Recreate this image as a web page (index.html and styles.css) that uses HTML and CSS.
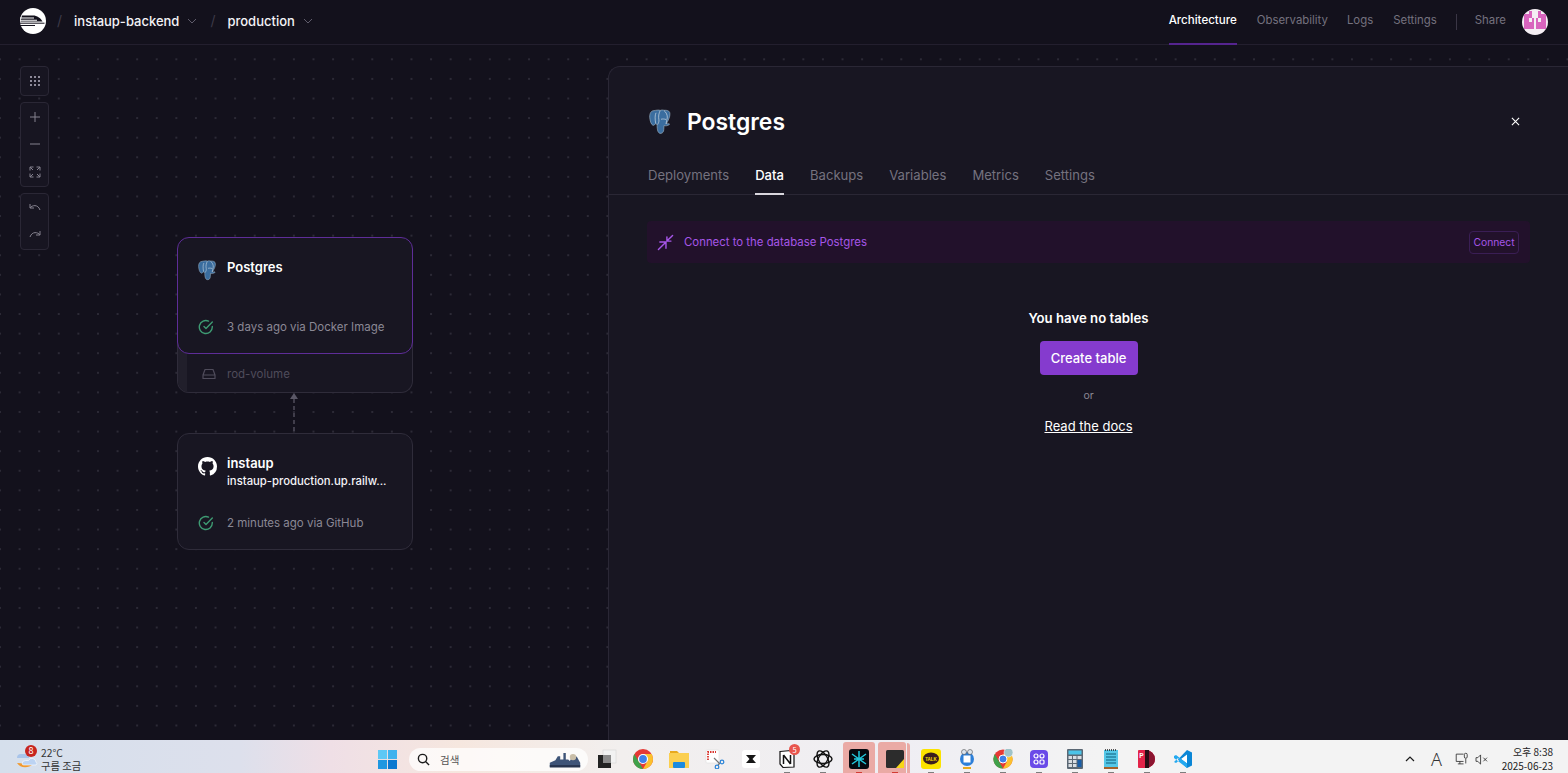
FILE: index.html
```html
<!DOCTYPE html>
<html lang="en">
<head>
<meta charset="utf-8">
<title>instaup-backend - Railway</title>
<link rel="stylesheet" href="styles.css">
</head>
<body>
<header class="topbar">
  <div class="crumbs">
    <svg class="logo" viewBox="0 0 26 26"><circle cx="13" cy="13" r="13" fill="#fff"/><path d="M2 7.500h11c4 0 7.500 2.500 9.500 6H.5z" fill="#13111c"/><path d="M0 10h14M0 12.200h17" stroke="#fff" stroke-width="1.100"/><path d="M0 15.200h24.500M0 17.500h15" stroke="#13111c" stroke-width="1"/></svg>
    <span class="slash first">/</span>
    <span class="crumb">instaup-backend</span>
    <svg class="chev" viewBox="0 0 10 6"><path d="M1 1l4 4 4-4" fill="none" stroke="currentColor" stroke-width="1"/></svg>
    <span class="slash">/</span>
    <span class="crumb">production</span>
    <svg class="chev" viewBox="0 0 10 6"><path d="M1 1l4 4 4-4" fill="none" stroke="currentColor" stroke-width="1"/></svg>
  </div>
  <nav class="topnav">
    <a class="navitem active">Architecture</a>
    <a class="navitem obs">Observability</a>
    <a class="navitem">Logs</a>
    <a class="navitem settings">Settings</a>
    <span class="navsep"></span>
    <a class="navitem share">Share</a>
    <svg class="avatar" viewBox="0 0 26 26"><defs><clipPath id="avc"><circle cx="13" cy="13" r="13"/></clipPath></defs><g clip-path="url(#avc)"><rect width="26" height="26" fill="#f4eef3"/><path d="M2 5h5v15H2zM19 5h5v15h-5zM7 2h3v7H7zM16 2h3v7h-3zM10 9h2v11h-2zM14 9h2v11h-2zM7 13h3v7H7zM16 13h3v7h-3z" fill="#d864bd"/></g></svg>
  </nav>
</header>

<main class="canvas">
  <div class="tools">
    <div class="toolgroup">
      <button class="tool"><svg viewBox="0 0 12 12"><g fill="#8d8a99"><rect x="1" y="1" width="2" height="2"/><rect x="5" y="1" width="2" height="2"/><rect x="9" y="1" width="2" height="2"/><rect x="1" y="5" width="2" height="2"/><rect x="5" y="5" width="2" height="2"/><rect x="9" y="5" width="2" height="2"/><rect x="1" y="9" width="2" height="2"/><rect x="5" y="9" width="2" height="2"/><rect x="9" y="9" width="2" height="2"/></g></svg></button>
    </div>
    <div class="toolgroup">
      <button class="tool"><svg viewBox="0 0 12 12"><path d="M6 1v10M1 6h10" class="ts"/></svg></button>
      <button class="tool"><svg viewBox="0 0 12 12"><path d="M1 6h10" class="ts"/></svg></button>
      <button class="tool"><svg viewBox="0 0 12 12"><path d="M1 4.500V1h3.500M1 1l3 3M7.500 1H11v3.500M11 1L8 4M1 7.500V11h3.500M1 11l3-3M7.500 11H11V7.500M11 11L8 8" class="ts"/></svg></button>
    </div>
    <div class="toolgroup">
      <button class="tool"><svg viewBox="0 0 12 12"><path d="M1 2v4h4M1 6c2-3 8-4 10 2" class="ts"/></svg></button>
      <button class="tool"><svg viewBox="0 0 12 12"><path d="M11 2v4H7M11 6C9 3 3 2 1 8" class="ts"/></svg></button>
    </div>
  </div>

  <section class="node-stack pg-node">
    <div class="card selected">
      <div class="card-head">
        <svg class="elephant" viewBox="0 0 24 24" preserveAspectRatio="none"><use href="#pg"/></svg>
        <div class="card-title">Postgres</div>
      </div>
      <div class="card-status">
        <svg class="check" viewBox="0 0 16 16"><path d="M14.300 7.400V8a6.500 6.500 0 1 1-3.800-5.900M14.300 3L8 9.400 6 7.400" fill="none" stroke="#3e9b73" stroke-width="1.400" stroke-linecap="round" stroke-linejoin="round"/></svg>
        <span>3 days ago via Docker Image</span>
      </div>
    </div>
    <div class="volume">
      <div class="vol-stripe"></div>
      <svg class="vol-icon" viewBox="0 0 14 12"><path d="M1 7l2-5.500h8L13 7v3.500H1zM1 7h12" fill="none" stroke="#4f4c5b" stroke-width="1.200" stroke-linejoin="round"/></svg>
      <span>rod-volume</span>
    </div>
  </section>

  <svg class="edge" viewBox="0 0 10 42"><path d="M1 8l4-6 4 6z" fill="#5a5766"/><path d="M5 8v33" stroke="#5a5766" stroke-width="1.300" stroke-dasharray="4 3"/></svg>

  <section class="node-stack gh-node">
    <div class="card">
      <div class="card-head">
        <svg class="github" viewBox="0 0 16 16"><path fill="#fff" d="M8 0C3.580 0 0 3.580 0 8c0 3.540 2.290 6.530 5.470 7.590.4.070.55-.17.55-.38 0-.19-.01-.82-.01-1.490-2.010.37-2.530-.49-2.690-.94-.09-.23-.48-.94-.82-1.130-.28-.15-.68-.52-.01-.53.63-.01 1.080.58 1.230.82.720 1.210 1.870.87 2.330.66.070-.52.280-.87.510-1.070-1.780-.2-3.640-.89-3.640-3.950 0-.87.310-1.590.820-2.150-.08-.2-.36-1.020.08-2.120 0 0 .67-.21 2.200.82.640-.18 1.320-.27 2-.27s1.360.09 2 .27c1.530-1.040 2.200-.82 2.200-.82.440 1.100.16 1.920.08 2.120.51.560.82 1.270.82 2.150 0 3.070-1.870 3.750-3.650 3.950.29.250.54.730.54 1.480 0 1.070-.01 1.930-.01 2.200 0 .21.150.46.550.38A8.010 8.010 0 0 0 16 8c0-4.420-3.580-8-8-8z"/></svg>
        <div class="card-text">
          <div class="card-title">instaup</div>
          <div class="card-url">instaup-production.up.railw...</div>
        </div>
      </div>
      <div class="card-status">
        <svg class="check" viewBox="0 0 16 16"><path d="M14.300 7.400V8a6.500 6.500 0 1 1-3.800-5.900M14.300 3L8 9.400 6 7.400" fill="none" stroke="#3e9b73" stroke-width="1.400" stroke-linecap="round" stroke-linejoin="round"/></svg>
        <span>2 minutes ago via GitHub</span>
      </div>
    </div>
  </section>

  <aside class="panel">
    <div class="panel-head">
      <svg class="elephant big" viewBox="0 0 24 24" preserveAspectRatio="none">
        <defs><g id="pg">
          <path d="M5 1.500C2.200 1.500.5 4 .7 7.500c.2 3.300 1.400 6.800 3.200 7.500 1.200.4 1.900-.6 2.600-1.500.6.500 1.200.7 1.700.8-.2 1-.1 3 .3 5 .5 2.300 1.800 3.500 3.500 3.200 1.700-.3 2.700-1.400 2.800-3.700l.2-3.500c1.800.5 3.300.2 5-.7.900-.6.500-1.200-.7-1-.9.100-1.500.1-1.900-.1 1.700-2.600 3.800-6.500 3.500-9C21 1.500 17.800 1 15 1.200c-1.100-.4-2.600-.4-3.800.1C9.500.6 7 1.200 5 1.500z" fill="#3a6d9f" stroke="#9fb4c6" stroke-width=".6"/>
          <path d="M7 3.500c-1 2-1.200 5.500-.3 9.800M11.200 1.500C9.800 4 9.200 7 9.900 10c.4 1.700-.7 3.300-1.200 4.300M15 1.500c2.300 1.500 3.500 4.200 3.300 6.700-.1 1.800-1.300 3.500-1.300 5.700M12 9.500c1.500-.5 3.500-.3 5 .2" fill="none" stroke="#dfe7ee" stroke-width=".6"/>
        </g></defs>
        <use href="#pg"/>
      </svg>
      <h1 class="panel-title">Postgres</h1>
      <button class="close"><svg viewBox="0 0 10 10"><path d="M1 1l8 8M9 1L1 9" stroke="#fff" stroke-width="1.200"/></svg></button>
    </div>
    <div class="tabs">
      <a class="tab">Deployments</a>
      <a class="tab current">Data</a>
      <a class="tab">Backups</a>
      <a class="tab">Variables</a>
      <a class="tab">Metrics</a>
      <a class="tab">Settings</a>
    </div>
    <div class="panel-body">
      <div class="banner">
        <svg class="plug" viewBox="0 0 18 18"><path d="M1.500 16.500L8.500 9.500M3 8.500h6.500V15M16.500 1.500L11 7M14.800 7.500H10.500V3" fill="none" stroke="#a656e8" stroke-width="1.500" stroke-linecap="round" stroke-linejoin="round"/></svg>
        <span class="banner-text">Connect to the database Postgres</span>
        <button class="connect">Connect</button>
      </div>
      <div class="empty">
        <div class="empty-title">You have no tables</div>
        <button class="create">Create table</button>
        <div class="or">or</div>
        <a class="docs">Read the docs</a>
      </div>
    </div>
  </aside>
</main>

<footer class="taskbar">
  <div class="weather">
    <svg class="wicon" viewBox="0 0 24 22"><path d="M2 10a4 4 0 0 1 4-4h5a3 3 0 0 1 3 4z" fill="#a8c4ea"/><path d="M2 15c3 5 11 6 16 1z" fill="#f09a30"/><path d="M7 16a3.500 3.500 0 0 1 3.500-3.500h3A4 4 0 0 1 21 14a2 2 0 0 1 0 3H9a2 2 0 0 1-2-1z" fill="#bcd3f2" stroke="#fff" stroke-width=".6"/></svg>
    <span class="wbadge">8</span>
    <div class="wtext"><div>22°C</div><div>구름 조금</div></div>
  </div>
  <div class="apps">
    <svg class="win" viewBox="0 0 20 20"><rect width="9.500" height="9.500" fill="#5ec8f5"/><rect x="10.500" width="9.500" height="9.500" fill="#3fb2ee"/><rect y="10.500" width="9.500" height="9.500" fill="#1f97e0"/><rect x="10.500" y="10.500" width="9.500" height="9.500" fill="#0a78d0"/></svg>
    <div class="search">
      <svg class="mag" viewBox="0 0 14 14"><circle cx="6" cy="6" r="4.500" fill="none" stroke="#1b1b1b" stroke-width="1.500"/><path d="M9.500 9.500l3.500 3.500" stroke="#1b1b1b" stroke-width="1.500"/></svg>
      <span class="search-text">검색</span>
      <svg class="search-art" viewBox="0 0 40 20"><path d="M1 19v-5l7-3 3-5h3v4h4V2h3v8h3l2 2 3-5a4 4 0 0 1 6 0l4 7v5z" fill="#3e5478"/><path d="M1 17h38v3H1z" fill="#26344f"/><circle cx="30" cy="7" r="4" fill="#c9bea8"/></svg>
    </div>
    <span class="app"><svg viewBox="0 0 20 20"><rect x="6" y="1" width="13" height="13" fill="#f2f2f2" stroke="#d0d0d0" stroke-width=".5"/><rect x="1" y="6" width="13" height="13" fill="#222"/><rect x="6" y="6" width="8" height="8" fill="#8b8b8b"/></svg></span>
    <span class="app"><svg viewBox="0 0 20 20"><circle cx="10" cy="10" r="10" fill="#e53935"/><path d="M10 5h8.660A10 10 0 0 1 10 20l4.330-7.500z" fill="#fbc02d"/><path d="M1.340 5L5.670 12.500 10 20A10 10 0 0 1 1.340 5z" fill="#3fa14a"/><circle cx="10" cy="10" r="4.500" fill="#3f7fe8" stroke="#fff" stroke-width="1.200"/></svg></span>
    <span class="app"><svg viewBox="0 0 20 20"><path d="M1 2h7l2 2H1z" fill="#e8a91d"/><rect x="0" y="4" width="20" height="15" fill="#fbcf50"/><rect x="4" y="13" width="12" height="6" rx="1" fill="#1b8be0"/></svg></span>
    <span class="app"><svg viewBox="0 0 20 20"><rect x="1" y="1" width="13" height="13" rx="1" fill="#fff" stroke="#ddd" stroke-width=".6"/><path d="M3 11V3h8" fill="none" stroke="#d9362f" stroke-width="1.800" stroke-dasharray="1.500 1"/><path d="M9 9l6 6M13 16l2-2" stroke="#777" stroke-width="1.200"/><circle cx="17" cy="13" r="1.800" fill="none" stroke="#2c85d8" stroke-width="1.200"/><circle cx="12" cy="18" r="1.800" fill="none" stroke="#2c85d8" stroke-width="1.200"/></svg></span>
    <span class="app"><svg viewBox="0 0 20 20"><rect x="1" y="1" width="18" height="18" rx="3" fill="#fff"/><path d="M5 6h10l-3.500 4 3.500 4H5l3.500-4z" fill="#161616"/></svg></span>
    <span class="app"><svg viewBox="0 0 20 20"><path d="M3 2.500l11-1 3 2.500v14l-11 .5-3-3.500z" fill="#fff" stroke="#111" stroke-width="1.200"/><path d="M6.500 6v9M6.500 6l7 9M13.500 6v9" fill="none" stroke="#111" stroke-width="1.500"/></svg><span class="app-badge">5</span><i class="dot"></i></span>
    <span class="app"><svg viewBox="0 0 20 20"><g fill="none" stroke="#111" stroke-width="1.400"><ellipse cx="10" cy="10" rx="9" ry="4.500"/><ellipse cx="10" cy="10" rx="9" ry="4.500" transform="rotate(60 10 10)"/><ellipse cx="10" cy="10" rx="9" ry="4.500" transform="rotate(120 10 10)"/></g></svg><i class="dot"></i></span>
    <span class="app running"><svg viewBox="0 0 20 20"><rect width="20" height="20" rx="3" fill="#06090f"/><path d="M10 2v16M3 5l14 10M17 5L3 15M5 10h10" stroke="#22c7dc" stroke-width="1.500"/></svg><i class="dot red"></i></span>
    <span class="app running stacked"><svg viewBox="0 0 20 20"><rect width="18" height="18" x="1" y="1" rx="1.500" fill="#2c2c2c"/><path d="M19 10v9h-8z" fill="#f7d616"/></svg><i class="dot red"></i></span>
    <span class="app"><svg viewBox="0 0 20 20"><rect width="20" height="20" rx="3" fill="#fbe300"/><ellipse cx="10" cy="9.500" rx="8" ry="6" fill="#3b1e1e"/><text x="10" y="11.500" class="talk">TALK</text></svg><i class="dot"></i></span>
    <span class="app"><svg viewBox="0 0 20 20"><circle cx="10" cy="10" r="7" fill="#2d7fd8"/><circle cx="7" cy="3" r="2.500" fill="#dfe6ee" stroke="#333" stroke-width=".5"/><circle cx="13" cy="3" r="2.500" fill="#dfe6ee" stroke="#333" stroke-width=".5"/><rect x="6.500" y="6.500" width="7" height="7" fill="#fff"/><path d="M6 19h8" stroke="#e8a91d" stroke-width="2"/></svg><i class="dot"></i></span>
    <span class="app"><svg viewBox="0 0 20 20"><circle cx="10" cy="10" r="9.500" fill="#e53935"/><path d="M10 5h8.200A9.500 9.500 0 0 1 10 19.500l4-7z" fill="#fbc02d"/><path d="M1.800 5L10 19.500A9.500 9.500 0 0 1 1.800 5z" fill="#3fa14a"/><circle cx="10" cy="10" r="4" fill="#3f7fe8" stroke="#fff"/><circle cx="15.500" cy="3.500" r="4.500" fill="#9fc3c9" stroke="#fff" stroke-width=".5"/></svg><i class="dot"></i></span>
    <span class="app"><svg viewBox="0 0 20 20"><rect x="1" y="1" width="18" height="18" rx="4" fill="#6a4ae8"/><g fill="none" stroke="#fff" stroke-width="1.200"><circle cx="7" cy="7" r="2"/><circle cx="13" cy="7" r="2"/><circle cx="7" cy="13" r="2"/><rect x="11" y="11" width="4" height="4" rx="1"/></g></svg><i class="dot"></i></span>
    <span class="app"><svg viewBox="0 0 20 20"><rect x="2" width="16" height="20" rx="1" fill="#5b6874"/><rect x="3.500" y="1.500" width="13" height="4" fill="#4cc4e8"/><g fill="#d9dee3"><rect x="3.500" y="7" width="3.500" height="3"/><rect x="8" y="7" width="3.500" height="3"/><rect x="3.500" y="11" width="3.500" height="3"/><rect x="8" y="11" width="3.500" height="3"/><rect x="3.500" y="15" width="3.500" height="3"/><rect x="8" y="15" width="3.500" height="3"/></g><rect x="12.500" y="11" width="4" height="7" fill="#1a5fa8"/><rect x="12.500" y="7" width="4" height="3" fill="#d9dee3"/></svg><i class="dot"></i></span>
    <span class="app"><svg viewBox="0 0 20 20"><rect x="3" y="1" width="14" height="19" fill="#55c8e8"/><rect x="3" y="18" width="14" height="2" fill="#a5622b"/><path d="M5 5h10M5 8h10M5 11h10M5 14h10" stroke="#0d5f7c" stroke-width="1.200"/><path d="M4 1h12" stroke="#222" stroke-width="1.500" stroke-dasharray="1 1"/></svg><i class="dot"></i></span>
    <span class="app"><svg viewBox="0 0 20 20"><path d="M1 2a1 1 0 0 1 1-1h7a9 9 0 0 1 0 18H2a1 1 0 0 1-1-1z" fill="#e32348"/><path d="M9 1a9 9 0 0 1 0 18 18 18 0 0 0 0-18z" fill="#8b1530"/><rect x="8" y="1" width="4" height="18" fill="#2a0d14"/><text x="4.500" y="8.500" class="pdf">P</text></svg><i class="dot"></i></span>
    <span class="app"><svg viewBox="0 0 20 20"><path d="M14 1l5 2.500v13L14 19 5 10.500z" fill="#0a86d6"/><path d="M14 5.500v9L8 10z" fill="#fff"/><path d="M1 7l2-1 11 8.500V19L1 9zM1 13l2 1 3.500-3L5 9z" fill="#23a9f0"/></svg><i class="dot"></i></span>
  </div>
  <div class="tray">
    <svg class="tray-up" viewBox="0 0 10 6"><path d="M1 5l4-4 4 4" fill="none" stroke="#1c1c1c" stroke-width="1.200"/></svg>
    <span class="tray-a">A</span>
    <svg class="tray-mon" viewBox="0 0 16 15"><path d="M10.500 1.500H1.500v9h9M3.500 13.500h7M6 10.500v3" fill="none" stroke="#2a2a2a"/><rect x="11.500" y=".5" width="3.500" height="6" rx="1.500" fill="none" stroke="#2a2a2a"/><path d="M13.250 7v6" stroke="#2a2a2a"/></svg>
    <svg class="tray-vol" viewBox="0 0 14 12"><path d="M1 4h2l3-3v10L3 8H1zM9 4l4 4M13 4l-4 4" fill="none" stroke="#2a2a2a" stroke-width=".9"/></svg>
    <div class="clock"><div>오후 8:38</div><div>2025-06-23</div></div>
  </div>
</footer>
</body>
</html>
```
FILE: styles.css
```css
* { box-sizing: border-box; }
html, body { margin: 0; height: 100%; }
body {
  display: flex;
  flex-direction: column;
  height: 773px;
  overflow: hidden;
  background: #13111c;
  font-family: Inter, "Noto Sans", sans-serif;
  color: #fff;
}
button { font-family: inherit; border: 0; padding: 0; background: none; color: inherit; }

/* top bar */
.topbar {
  flex: 0 0 45px;
  display: flex;
  align-items: flex-start;
  justify-content: space-between;
  padding: 0 20px;
  border-bottom: 1px solid #231f2e;
  background: #13111c;
}
.crumbs { display: flex; align-items: center; height: 41px; }
.logo { width: 26px; height: 26px; margin-right: 11px; }
.slash { color: #3d3a48; font-size: 14px; margin: 0 12px 0 0; }
.crumb { font-size: 13px; font-weight: 500; color: #f4f3f7; }
.chev { width: 10px; height: 6px; margin: 0 13px 0 8px; color: #5f5c6b; }
.topnav { display: flex; align-items: center; height: 44px; }
.navitem { font-size: 11.400px; color: #75727f; margin-right: 20px; line-height: 40px; padding-bottom: 4px; }
.navitem.active { color: #fff; font-weight: 500; position: relative; font-size: 11.550px; }
.navitem.active::after {
  content: "";
  position: absolute;
  left: 0;
  right: 0;
  bottom: -1px;
  height: 2px;
  background: #55248f;
}
.navitem.obs { margin-right: 19px; }
.navitem.settings { margin-right: 19px; }
.navsep { width: 1px; height: 16px; background: #3a3645; margin-right: 18px; }
.navitem.share { margin-right: 16px; }
.avatar { width: 26px; height: 26px; }

/* canvas */
.canvas {
  flex: 1;
  position: relative;
  min-height: 0;
  background-color: #13111c;
  background-image: radial-gradient(circle, #2c2a36 .7px, transparent 1px);
  background-size: 19.600px 19.600px;
  background-position: 9.800px 4.500px;
}
.tools {
  position: absolute;
  left: 20px;
  top: 21px;
  display: flex;
  flex-direction: column;
  gap: 6.500px;
}
.toolgroup {
  width: 29px;
  display: flex;
  flex-direction: column;
  background: #171521;
  border: 1px solid #2a2735;
  border-radius: 4px;
}
.tool { height: 27.500px; display: flex; align-items: center; justify-content: center; }
.tool svg { width: 12px; height: 12px; }
.ts { fill: none; stroke: #85828f; stroke-width: 1; }

.node-stack { position: absolute; width: 236px; left: 177px; }
.pg-node { top: 192px; }
.gh-node { top: 388px; }
.card {
  height: 117px;
  padding: 0 20px;
  background: #181622;
  border: 1px solid #2f2c3a;
  border-radius: 12px;
  display: flex;
  flex-direction: column;
  position: relative;
  z-index: 1;
}
.card.selected { border-color: #5e2d98; }
.card-head { display: flex; gap: 9px; height: 68px; padding-top: 20px; align-items: flex-start; }
.elephant { width: 20px; height: 21px; flex: none; margin-top: 2px; }
.github { width: 19px; height: 19px; flex: none; margin-top: 3px; margin-right: 1px; }
.card-text { min-width: 0; }
.card-title { font-size: 13px; font-weight: 600; color: #fff; line-height: 18px; }
.card-url { font-size: 11.300px; font-weight: 500; color: #f4f3f7; line-height: 18px; white-space: nowrap; }
.card-status {
  display: flex;
  align-items: center;
  gap: 13px;
  height: 18px;
  margin-top: 12px;
  font-size: 11.500px;
  color: #8b8895;
  white-space: nowrap;
}
.check { width: 16px; height: 16px; flex: none; }
.volume {
  margin-top: -12px;
  height: 51px;
  padding-top: 13px;
  display: flex;
  align-items: center;
  gap: 11px;
  position: relative;
  overflow: hidden;
  background: #181622;
  border: 1px solid #2f2c3a;
  border-top: 0;
  border-radius: 0 0 12px 12px;
  font-size: 11.500px;
  color: #4f4c5b;
}
.vol-stripe { width: 9px; align-self: stretch; margin-top: -13px; background: #211f2b; margin-right: 4px; }
.vol-icon { width: 14px; height: 12px; }
.edge { position: absolute; left: 289px; top: 346px; width: 10px; height: 42px; }

/* panel */
.panel {
  position: absolute;
  left: 608px;
  right: 0;
  top: 21px;
  bottom: 0;
  background: #181622;
  border: 1px solid #2a2735;
  border-right: 0;
  border-bottom: 0;
  border-top-left-radius: 12px;
  display: flex;
  flex-direction: column;
}
.panel-head { display: flex; align-items: center; height: 71px; padding: 39px 47px 0 40px; }
.elephant.big { width: 24px; height: 26px; margin: 0 14px 0 0; }
.panel-title { margin: 0; font-size: 22.900px; font-weight: 600; line-height: 32px; flex: 1; }
.close { width: 10px; height: 10px; display: flex; }
.close svg { width: 9px; height: 9px; }
.tabs {
  display: flex;
  gap: 26px;
  height: 57px;
  padding: 0 39px;
  align-items: flex-end;
  border-bottom: 1px solid #2a2735;
}
.tab {
  font-size: 13.100px;
  line-height: 20px;
  height: 38px;
  color: #75727f;
  position: relative;
  padding-top: 9px;
}
.tab.current { color: #fff; font-weight: 500; }
.tab.current::after {
  content: "";
  position: absolute;
  left: 0;
  right: 0;
  bottom: -1px;
  height: 2px;
  background: #d8d6dd;
}
.panel-body { padding: 26px 38px 0; display: flex; flex-direction: column; }
.banner {
  height: 42px;
  display: flex;
  align-items: center;
  padding: 0 11px 0 10px;
  background: #22112b;
  border-radius: 4px;
}
.plug { width: 17px; height: 17px; margin-right: 10px; }
.banner-text { flex: 1; font-size: 11.400px; color: #a656e8; }
.connect {
  width: 50px;
  height: 23px;
  border: 1px solid #3a1e55;
  border-radius: 4px;
  font-size: 10.300px;
  color: #a656e8;
}
.empty { display: flex; flex-direction: column; align-items: center; padding-top: 46px; }
.empty-title { font-size: 13.200px; font-weight: 600; line-height: 18px; }
.create {
  margin-top: 14px;
  width: 98px;
  height: 34px;
  background: #853bce;
  border-radius: 4px;
  font-size: 13px;
  font-weight: 500;
  color: #fff;
}
.or { margin-top: 13px; font-size: 10.500px; line-height: 16px; color: #8b8895; }
.docs { margin-top: 13px; font-size: 13px; line-height: 18px; text-decoration: underline; }

/* taskbar */
.taskbar {
  flex: 0 0 33px;
  display: flex;
  align-items: flex-end;
  position: relative;
  background: linear-gradient(90deg, #d5dfec 0, #dde0ec 240px, #efdfe6 330px, #f6e7df 460px, #f2efee 620px, #efeef3 900px, #f3f3f3 1100px);
  font-family: "Noto Sans CJK KR", "Noto Sans", sans-serif;
  color: #222;
}
.weather { width: 378px; height: 31px; padding: 3px 0 0 15px; display: flex; align-items: center; position: relative; flex: none; }
.wicon { width: 24px; height: 22px; }
.wbadge {
  position: absolute;
  left: 25px;
  top: 3px;
  width: 12px;
  height: 12px;
  border-radius: 50%;
  background: #c7251d;
  color: #fff;
  font-size: 9px;
  line-height: 12px;
  text-align: center;
}
.wtext { margin-left: 2px; font-size: 10.300px; line-height: 13px; color: #333; }
.apps { display: flex; align-items: center; height: 31px; }
.win { width: 19px; height: 19px; flex: none; margin-top: 3px; }
.search {
  width: 179px;
  height: 23px;
  margin: 3px 1px 0 12px;
  padding: 0 7px 0 8px;
  display: flex;
  align-items: center;
  background: rgba(255,255,255,.75);
  border-radius: 12px;
  flex: none;
}
.mag { width: 13px; height: 13px; }
.search-text { margin-left: 10px; font-size: 10.500px; color: #555; flex: 1; }
.search-art { width: 32px; height: 19px; }
.app {
  width: 36px;
  height: 31px;
  padding-top: 3px;
  display: flex;
  align-items: center;
  justify-content: center;
  position: relative;
  flex: none;
}
.app > svg { width: 20px; height: 20px; position: relative; }
.app.running::before {
  content: "";
  position: absolute;
  left: 2px;
  right: 2px;
  top: 0;
  bottom: 0;
  background: #eaaaa5;
  border-radius: 3px 3px 0 0;
}
.app.stacked::before { left: 1px; right: 7px; }
.app.stacked::after {
  content: "";
  position: absolute;
  left: 30px;
  width: 3px;
  top: 1px;
  bottom: 0;
  background: #eaaaa5;
  border-radius: 0 3px 0 0;
}
.app-badge {
  position: absolute;
  left: 20px;
  top: 2px;
  width: 11px;
  height: 11px;
  border-radius: 50%;
  background: #e8554d;
  color: #fff;
  font-size: 7.500px;
  line-height: 11px;
  text-align: center;
}
.dot { position: absolute; bottom: 0; left: 50%; width: 6px; height: 1px; margin-left: -3px; background: #7d7d7d; }
.dot.red { background: #d23b33; }
.talk { font: 700 4.500px "Liberation Sans", sans-serif; fill: #fbe300; text-anchor: middle; }
.pdf { font: 700 6.500px "Liberation Sans", sans-serif; fill: #fff; text-anchor: middle; }
.tray { margin-left: auto; height: 31px; padding: 3px 15px 0 0; display: flex; align-items: center; }
.tray-up { width: 10px; height: 6px; }
.tray-a { margin-left: 16px; font-family: "Noto Sans", sans-serif; font-size: 18px; line-height: 20px; font-weight: 300; color: #333; }
.tray-mon { width: 13px; height: 14px; margin-left: 13px; }
.tray-vol { width: 13px; height: 11px; margin-left: 7px; }
.clock { margin-left: 13px; width: 52px; text-align: right; font-size: 10px; line-height: 14px; color: #222; }
```
